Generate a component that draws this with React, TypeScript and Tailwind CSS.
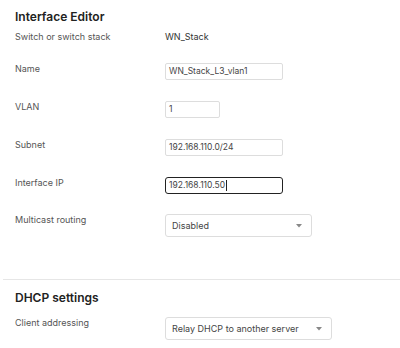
import React from 'react';

function Row({ label, children, className = '' }: { label: string; children: React.ReactNode; className?: string }) {
  return (
    <div className={`flex items-start ${className}`}>
      <div className="w-[150px] shrink-0 text-[9px] leading-[12px] text-[#555]">{label}</div>
      {children}
    </div>
  );
}

function TextBox({ value, width, focused = false }: { value: string; width: string; focused?: boolean }) {
  return (
    <div
      className={`${width} h-[17px] flex items-center pl-[3px] text-[8.5px] text-[#444] ${
        focused ? 'border-[1.5px] border-[#222] rounded-[3px]' : 'border border-[#ddd] rounded-[2px]'
      }`}
    >
      <span>{value}</span>
      {focused && <span className="w-px h-[11px] bg-[#222] ml-[0.5px]" />}
    </div>
  );
}

function Dropdown({ value, width }: { value: string; width: string }) {
  return (
    <div className={`${width} h-[23px] flex items-center justify-between pl-[6px] pr-[9px] border border-[#ddd] rounded-[3px] text-[9px] text-[#444]`}>
      <span>{value}</span>
      <svg width="6" height="4" viewBox="0 0 6 4">
        <path d="M0 0h6L3 3.5z" fill="#888" />
      </svg>
    </div>
  );
}

export default function App() {
  return (
    <div className="w-[400px] h-[348px] overflow-hidden bg-white font-['Inter',sans-serif]">
      <div className="pl-[15px] pt-[9px]">
        <h1 className="text-[12px] leading-[16px] font-semibold text-[#222]">Interface Editor</h1>
        <Row label="Switch or switch stack" className="mt-[6px]">
          <div className="text-[9px] leading-[12px] text-[#333]">WN_Stack</div>
        </Row>
        <Row label="Name" className="mt-[20px]">
          <TextBox value="WN_Stack_L3_vlan1" width="w-[118px]" />
        </Row>
        <Row label="VLAN" className="mt-[21px]">
          <TextBox value="1" width="w-[55px]" />
        </Row>
        <Row label="Subnet" className="mt-[21px]">
          <TextBox value="192.168.110.0/24" width="w-[118px]" />
        </Row>
        <Row label="Interface IP" className="mt-[21px]">
          <TextBox value="192.168.110.50" width="w-[118px]" focused />
        </Row>
        <Row label="Multicast routing" className="mt-[20px]">
          <Dropdown value="Disabled" width="w-[147px]" />
        </Row>
      </div>

      <div className="ml-[3px] mt-[42px] h-px bg-[#e6e6e6]" />

      <div className="pl-[15px]">
        <h2 className="mt-[10px] text-[12px] leading-[16px] font-semibold text-[#222]">DHCP settings</h2>
        <Row label="Client addressing" className="mt-[11px]">
          <Dropdown value="Relay DHCP to another server" width="w-[167px]" />
        </Row>
      </div>
    </div>
  );
}
